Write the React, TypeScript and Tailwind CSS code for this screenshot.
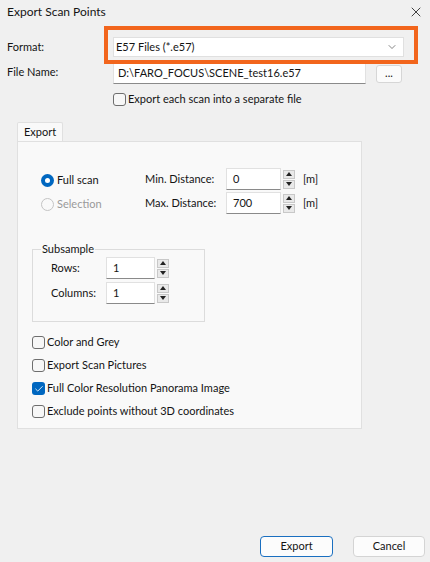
import { ChevronDown, X, Check } from "lucide-react";

function Spinner() {
  return (
    <div className="ml-[2px] flex w-[12px] flex-col gap-[1px]">
      <div className="flex h-[9px] items-center justify-center border border-[#c8c8c8] bg-[#e9e9e9]">
        <svg width="6" height="4" viewBox="0 0 6 4">
          <path d="M0 4 L3 0 L6 4 Z" fill="#222" />
        </svg>
      </div>
      <div className="flex h-[9px] items-center justify-center border border-[#c8c8c8] bg-[#e9e9e9]">
        <svg width="6" height="4" viewBox="0 0 6 4">
          <path d="M0 0 L3 4 L6 0 Z" fill="#222" />
        </svg>
      </div>
    </div>
  );
}

function NumberField({ value, width }: { value: string; width: string }) {
  return (
    <div className="flex items-center">
      <div
        className={`flex h-[22px] ${width} items-center border border-[#e1e1e1] border-b-[#8a8a8a] bg-white pl-[6px]`}
      >
        {value}
      </div>
      <Spinner />
    </div>
  );
}

function CheckBox({ label, checked }: { label: string; checked?: boolean }) {
  return (
    <div className="flex h-[23px] items-center whitespace-nowrap">
      {checked ? (
        <span className="flex h-[13px] w-[13px] items-center justify-center rounded-[3px] bg-[#0067c0]">
          <Check size={10} strokeWidth={2} color="#fff" />
        </span>
      ) : (
        <span className="h-[13px] w-[13px] rounded-[3px] border border-[#6e6e6e] bg-[#f7f7f7]" />
      )}
      <span className="ml-[2px]">{label}</span>
    </div>
  );
}

export default function App() {
  return (
    <div className="relative h-[562px] w-[430px] overflow-hidden bg-[#f0f0f0] text-[11px] text-[#141414] [font-family:Lato,sans-serif]">
      {/* title bar */}
      <div className="flex h-[24px] items-center justify-between pl-[7px] pr-[6px]">
        <span className="text-[12px]">Export Scan Points</span>
        <X size={16} strokeWidth={1.2} />
      </div>

      {/* format / file name */}
      <div className="mt-[13px] flex h-[20px] items-center">
        <span className="w-[113px] pl-[7px]">Format:</span>
        <div className="flex h-[20px] w-[291px] items-center justify-between border border-[#e0e0e0] bg-white pl-[2px] pr-[5px]">
          <span>E57 Files (*.e57)</span>
          <ChevronDown size={12} strokeWidth={1.3} color="#444" />
        </div>
      </div>
      <div className="mt-[6px] flex h-[21px] items-center">
        <span className="w-[113px] self-start pl-[7px] leading-[18px]">File Name:</span>
        <div className="flex h-[21px] w-[253px] items-center border border-[#e1e1e1] border-b-[#8a8a8a] bg-white pl-[4px]">
          D:\FARO_FOCUS\SCENE_test16.e57
        </div>
        <div className="ml-[10px] flex h-[18px] w-[26px] items-center justify-center rounded-[3px] border border-[#d6d6d6] bg-[#fbfbfb] pb-[3px] leading-none">
          ...
        </div>
      </div>
      <div className="ml-[113px] mt-[4px]">
        <CheckBox label="Export each scan into a separate file" />
      </div>

      {/* tab control */}
      <div className="ml-[17px] mt-[11px] w-[345px]">
        <div className="flex h-[20px] w-[46px] items-center justify-center rounded-t-[2px] border border-b-0 border-[#e0e0e0] bg-[#f9f9f9]">
          Export
        </div>
        <div className="-mt-[1px] h-[288px] border border-[#e0e0e0] bg-[#f9f9f9] pl-[14px] pt-[26px]">
          <div className="flex whitespace-nowrap">
            <div className="flex w-[113px] flex-col pl-[9px]">
              <div className="flex h-[24px] items-center">
                <span className="flex h-[13px] w-[13px] items-center justify-center rounded-full bg-[#0067c0]">
                  <span className="h-[5px] w-[5px] rounded-full bg-white" />
                </span>
                <span className="ml-[3px]">Full scan</span>
              </div>
              <div className="flex h-[24px] items-center text-[#9a9a9a]">
                <span className="h-[13px] w-[13px] rounded-full border border-[#c4c4c4]" />
                <span className="ml-[3px]">Selection</span>
              </div>
            </div>
            <div className="flex flex-col gap-[2px]">
              <div className="flex h-[22px] items-center">
                <span className="w-[81px]">Min. Distance:</span>
                <NumberField value="0" width="w-[55px]" />
                <span className="ml-[8px]">[m]</span>
              </div>
              <div className="flex h-[22px] items-center">
                <span className="w-[81px]">Max. Distance:</span>
                <NumberField value="700" width="w-[55px]" />
                <span className="ml-[8px]">[m]</span>
              </div>
            </div>
          </div>

          <fieldset className="ml-0 mt-[27px] h-[79px] w-[173px] border border-[#dcdcdc] pl-[18px] whitespace-nowrap">
            <legend className="-ml-[10px] px-[1px] leading-[12px]">Subsample</legend>
            <div className="mt-[2px] flex h-[22px] items-center">
              <span className="w-[55px]">Rows:</span>
              <NumberField value="1" width="w-[49px]" />
            </div>
            <div className="mt-[3px] flex h-[22px] items-center">
              <span className="w-[55px]">Columns:</span>
              <NumberField value="1" width="w-[49px]" />
            </div>
          </fieldset>

          <div className="mt-[9px] flex flex-col">
            <CheckBox label="Color and Grey" />
            <CheckBox label="Export Scan Pictures" />
            <CheckBox label="Full Color Resolution Panorama Image" checked />
            <CheckBox label="Exclude points without 3D coordinates" />
          </div>
        </div>
      </div>

      {/* dialog buttons */}
      <div className="mt-[107px] flex justify-end gap-[20px] pr-[5px]">
        <div className="flex h-[21px] w-[73px] items-center justify-center rounded-[4px] border border-[#1a6fc0] bg-[#fcfcfc]">
          Export
        </div>
        <div className="flex h-[21px] w-[72px] items-center justify-center rounded-[4px] border border-[#d4d4d4] bg-[#fcfcfc]">
          Cancel
        </div>
      </div>

      {/* orange highlight around the format selector */}
      <div className="absolute left-[104px] top-[26px] h-[38px] w-[314px] border-[4px] border-[#f2651c]" />
    </div>
  );
}
